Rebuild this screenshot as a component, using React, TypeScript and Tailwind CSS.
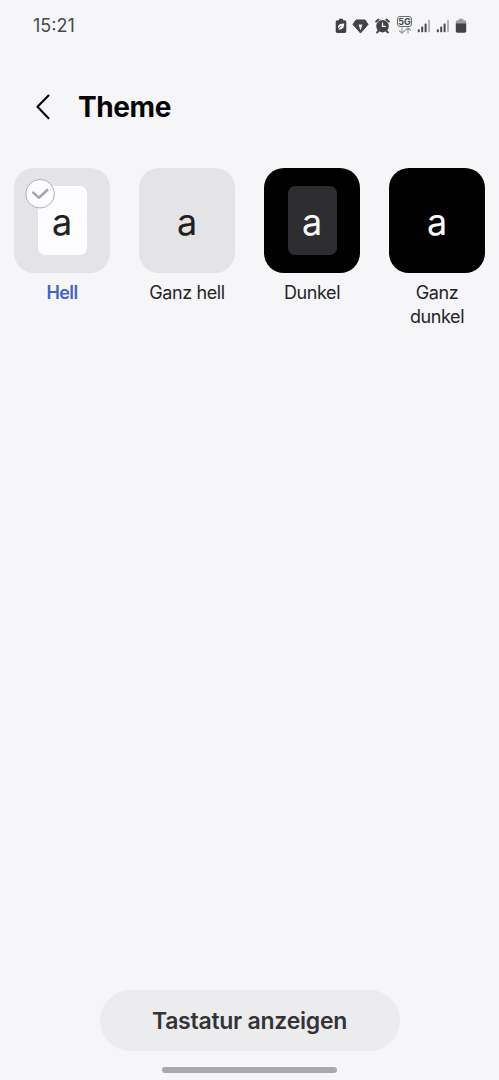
import React from "react";

type Theme = {
  label: string;
  card: string;
  keyStyle: string;
  labelStyle: string;
  selected?: boolean;
};

const themes: Theme[] = [
  {
    label: "Hell",
    card: "bg-[#e4e4e6]",
    keyStyle: "bg-[#fdfdff] text-[#202022]",
    labelStyle: "font-semibold text-[#4066bf] tracking-[-0.6px]",
    selected: true,
  },
  {
    label: "Ganz hell",
    card: "bg-[#e4e4e6]",
    keyStyle: "text-[#202022]",
    labelStyle: "text-[#252527] tracking-[-0.4px]",
  },
  {
    label: "Dunkel",
    card: "bg-black",
    keyStyle: "bg-[#2d2d2f] text-[#fafafa]",
    labelStyle: "text-[#252527] tracking-[-0.4px]",
  },
  {
    label: "Ganz dunkel",
    card: "bg-black",
    keyStyle: "text-[#fafafa]",
    labelStyle: "text-[#252527] tracking-[-0.4px]",
  },
];

function Signal() {
  return (
    <svg width="14" height="14" viewBox="0 0 14 14">
      <rect x="0.800" y="10.200" width="2" height="3" rx=".6" fill="#48484a" />
      <rect x="4.200" y="7.400" width="2" height="5.800" rx=".6" fill="#48484a" />
      <rect x="7.600" y="4.400" width="2" height="8.800" rx=".6" fill="#48484a" />
      <rect x="11" y="0.800" width="2" height="12.400" rx=".6" fill="#b4b4b6" />
    </svg>
  );
}

function StatusIcons() {
  return (
    <div className="flex items-start text-[#434345]">
      <svg className="mt-[3px]" width="12" height="16" viewBox="0 0 12 16">
        <path
          fill="currentColor"
          d="M4 .8h4v1.500h1.600c1 0 1.700.7 1.700 1.700v9.200c0 1-.7 1.700-1.700 1.700H2.400c-1 0-1.700-.7-1.700-1.700V4c0-1 .7-1.700 1.700-1.700H4z"
        />
        <path
          fill="#f6f6f9"
          d="M9.200 5.600C6 5.700 3 6.300 3 9c0 .6.2 1 .4 1.400.8-1.300 2-2 3.400-2.400-1.500.9-2.500 2-3.200 3.800l.8.3.4-.8c3.300.4 4.300-2 4.400-5.700z"
        />
      </svg>
      <svg className="mt-[4px] ml-[5px]" width="17" height="15" viewBox="0 0 17 15">
        <path
          fill="currentColor"
          stroke="currentColor"
          strokeWidth="1"
          strokeLinejoin="round"
          d="M4 1h9l3 4.400L8.500 14 1 5.400z"
        />
        <path fill="#f6f6f9" d="M6.600 5.600h3.800L8.500 11.400z" />
      </svg>
      <svg className="mt-[3px] ml-[6px]" width="15" height="16" viewBox="0 0 15 16">
        <path
          d="M1.200 3.600 3.600 1.600M13.800 3.600l-2.400-2M3.400 13l-1.200 1.400M11.600 13l1.200 1.400"
          stroke="currentColor"
          strokeWidth="2"
          strokeLinecap="round"
        />
        <circle cx="7.500" cy="8.200" r="6.200" fill="currentColor" />
        <path
          d="M7.500 4.900v3.500h2.800"
          fill="none"
          stroke="#f6f6f9"
          strokeWidth="1.300"
          strokeLinecap="round"
        />
      </svg>
      <div className="mt-[1px] ml-[7px] flex w-[15px] flex-col items-center">
        <span className="flex h-[11px] w-[15px] items-center justify-center rounded-[3px] border border-[#6a6a6c] text-[9px] leading-[9px] font-bold">
          5G
        </span>
        <svg width="14" height="7" viewBox="0 0 14 7" fill="none" stroke="#98989a" strokeWidth="1.100">
          <path d="M4 .3v5.800M1.200 3.500 4 6.200l2.800-2.700M10 6.500V1M7.200 3.500 10 .8l2.800 2.700" />
        </svg>
      </div>
      <div className="mt-[4px] ml-[5px] flex gap-[5px]">
        <Signal />
        <Signal />
      </div>
      <svg className="mt-[3px] ml-[5px]" width="12" height="16" viewBox="0 0 12 16">
        <path
          fill="#9c9c9e"
          d="M3.800.8h4.400v1.500h1.200c1.100 0 1.800.7 1.800 1.700v2H.8V4c0-1 .7-1.700 1.800-1.700h1.200z"
        />
        <path fill="currentColor" d="M.8 5.600h10.400v7.500c0 1-.7 1.700-1.700 1.700h-7c-1 0-1.700-.7-1.700-1.700z" />
      </svg>
    </div>
  );
}

function ThemeOption({ theme }: { theme: Theme }) {
  return (
    <button className="flex w-[96px] flex-col items-center">
      <span
        className={`relative flex h-[105px] w-full items-center justify-center rounded-[20px] ${theme.card}`}
      >
        <span
          className={`flex h-[69px] w-[49px] items-center justify-center rounded-[7px] pt-[3px] text-[36px] leading-none ${theme.keyStyle}`}
        >
          a
        </span>
        {theme.selected && (
          <svg className="absolute top-[10px] left-[11px]" width="31" height="31" viewBox="0 0 31 31" fill="none">
            <circle cx="15.100" cy="15.700" r="14.300" fill="#fdfdff" stroke="#b1b1b3" strokeWidth="1" />
            <path
              d="m8.300 14.700 5.600 5L22.300 12"
              stroke="#a8a8aa"
              strokeWidth="2.600"
              strokeLinecap="round"
              strokeLinejoin="round"
            />
          </svg>
        )}
      </span>
      <span className={`mt-[8px] w-[84px] text-[18px] leading-[24px] ${theme.labelStyle}`}>{theme.label}</span>
    </button>
  );
}

export default function App() {
  return (
    <div className="flex h-[1080px] w-[499px] flex-col bg-[#f6f6f9] font-['Inter',sans-serif]">
      <div className="flex h-[52px] items-start justify-between pt-[15px] pr-[32px] pl-[33px]">
        <span className="text-[18px] leading-[22px] text-[#48484a]">15:21</span>
        <StatusIcons />
      </div>
      <header className="flex h-[110px] items-center pl-[34px]">
        <button aria-label="Zurück">
          <svg width="18" height="28" viewBox="0 0 18 28" fill="none">
            <path
              d="M14.500 2.500 3.500 13.800l11 11.400"
              stroke="#050505"
              strokeWidth="2.100"
              strokeLinecap="round"
              strokeLinejoin="round"
            />
          </svg>
        </button>
        <h1 className="ml-[26px] text-[28px] leading-[34px] font-bold tracking-[-0.4px] text-[#050505]">
          Theme
        </h1>
      </header>
      <main className="flex flex-1 items-start justify-between pt-[6px] pr-[14px] pl-[14px]">
        {themes.map((theme) => (
          <ThemeOption key={theme.label} theme={theme} />
        ))}
      </main>
      <footer className="flex flex-col items-center pb-[7px]">
        <button className="h-[61px] w-[300px] rounded-full bg-[#ececee] pt-[2px] text-[23px] font-semibold tracking-[-0.25px] text-[#343436]">
          Tastatur anzeigen
        </button>
        <span className="mt-[16px] h-[6px] w-[175px] rounded-full bg-[#a9a9ab]" />
      </footer>
    </div>
  );
}
